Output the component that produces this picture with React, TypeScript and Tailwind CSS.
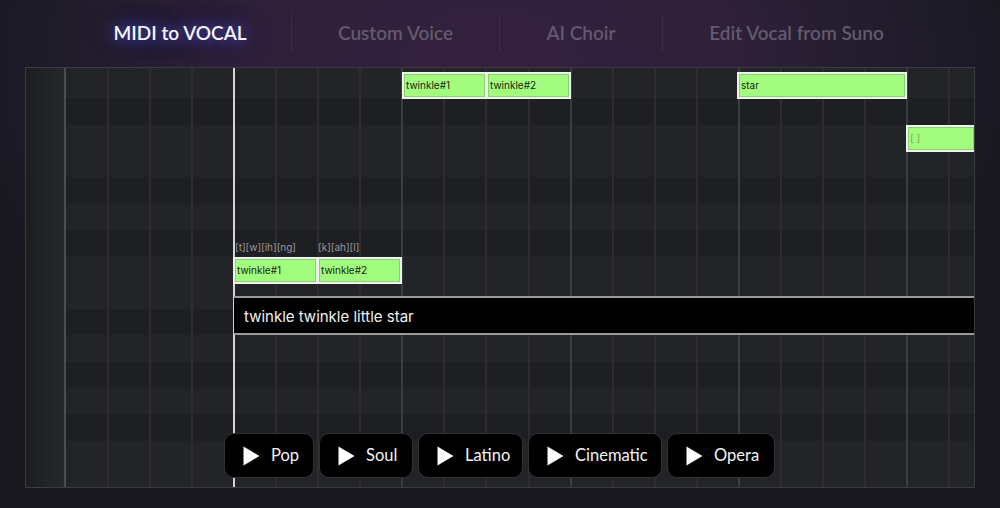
const DARK = new Set([1, 4, 6, 9, 11]);
const ROWS = Array.from({ length: 16 }, (_, i) => i);
const COLS = Array.from({ length: 22 }, (_, i) => i);

const TABS = [
  { label: "MIDI to VOCAL", w: "w-[222px]", active: true },
  { label: "Custom Voice", w: "w-[208px]", active: false },
  { label: "AI Choir", w: "w-[163px]", active: false },
  { label: "Edit Vocal from Suno", w: "w-[268px]", active: false },
];

const BTNS = [
  { label: "Pop", w: "w-[90px]" },
  { label: "Soul", w: "w-[94px]" },
  { label: "Latino", w: "w-[105px]" },
  { label: "Cinematic", w: "w-[134px]" },
  { label: "Opera", w: "w-[108px]" },
];

const NOTES = [
  { text: "twinkle#1", left: 376, top: 3.5, w: 85 },
  { text: "twinkle#2", left: 460, top: 3.5, w: 85 },
  { text: "star", left: 711, top: 3.5, w: 170 },
  { text: "twinkle#1", left: 207, top: 189, w: 85 },
  { text: "twinkle#2", left: 291, top: 189, w: 85 },
];

function Note({ text, left, top, w, faint }: { text: string; left: number; top: number; w: number; faint?: boolean }) {
  return (
    <div className="absolute h-[27px] border-2 border-[#eef2ec] bg-[#a2fd7e]" style={{ left, top, width: w }}>
      <div className={`flex h-full items-center border border-[#8ad070] pl-[1px] text-[10px] ${faint ? "text-[#67b553]" : "text-[#17230f]"}`}>
        {text}
      </div>
    </div>
  );
}

export default function App() {
  return (
    <div className="h-[508px] w-full overflow-hidden bg-[radial-gradient(ellipse_560px_400px_at_490px_70px,#34203e_0%,#2e2039_45%,#1c1a26_85%,#17171d_100%)] font-['Inter',sans-serif]">
      <header className="flex h-[67px] pb-[1px] pl-[69px]">
        {TABS.map((t, i) => (
          <div
            key={t.label}
            className={`mt-[14px] flex h-[37px] items-center justify-center pt-[2px] font-['Lato',sans-serif] text-[19px] font-semibold ${t.w} ${i > 0 ? "border-l border-[#3a3044]" : ""} ${
              t.active ? "text-[#f4f4fa] [text-shadow:0_0_12px_#4c4cc0,0_0_24px_#3c3ca8]" : "text-[#625a6e]"
            }`}
          >
            {t.label}
          </div>
        ))}
      </header>

      <main className="relative mx-[25px] h-[421px] w-[950px] overflow-hidden border border-[#3b3b43] bg-[#232428]">
        <div className="flex h-full flex-col">
          <div className="h-[4px] shrink-0 bg-[#232428]" />
          {ROWS.map((r) => (
            <div key={r} className={`h-[26.35px] shrink-0 ${DARK.has(r % 12) ? "bg-[#1e1f22]" : "bg-[#232428]"}`} />
          ))}
        </div>

        <div className="absolute inset-0 flex">
          <div className="h-full w-[40px] shrink-0 border-r-2 border-[#4c4c54] bg-gradient-to-r from-[#1b1d1f] to-[#27282c]" />
          {COLS.map((c) => (
            <div
              key={c}
              className={`h-full shrink-0 border-r-2 ${c === 0 ? "w-[42.6px]" : "w-[42.1px]"} ${
                c === 3 ? "border-[#d4d4d4]" : (c + 1) % 4 === 0 ? "border-[#3c3c44]" : "border-[#2c2c31]"
              }`}
            />
          ))}
        </div>

        {NOTES.map((n, i) => (
          <Note key={i} {...n} />
        ))}
        <Note text="[ ]" left={880} top={57} w={70} faint />

        <div className="absolute left-[209px] top-[172px] text-[10px] text-[#9a9a9e]">[t][w][ih][ng]</div>
        <div className="absolute left-[292px] top-[172px] text-[10px] text-[#9a9a9e]">[k][ah][l]</div>

        <div className="absolute left-[208px] right-0 top-[228px] flex h-[39px] items-center border-y-2 border-[#9a9a9a] bg-black pl-[10px] pt-[3px] text-[15px] text-[#f2f2f2]">
          twinkle twinkle little star
        </div>

        <div className="absolute bottom-[9px] left-[198px] flex gap-[5px]">
          {BTNS.map((b) => (
            <button
              key={b.label}
              className={`flex h-[45px] items-center rounded-[10px] border border-[#303036] bg-black pl-[18px] font-['Lato',sans-serif] text-[16.5px] text-[#f4f4f4] ${b.w}`}
            >
              <svg width="17" height="20" viewBox="0 0 17 20" className="mr-[11px] shrink-0">
                <path d="M0.5 0.5 L16.5 10 L0.5 19.5 Z" fill="#ffffff" />
              </svg>
              {b.label}
            </button>
          ))}
        </div>
      </main>
    </div>
  );
}
